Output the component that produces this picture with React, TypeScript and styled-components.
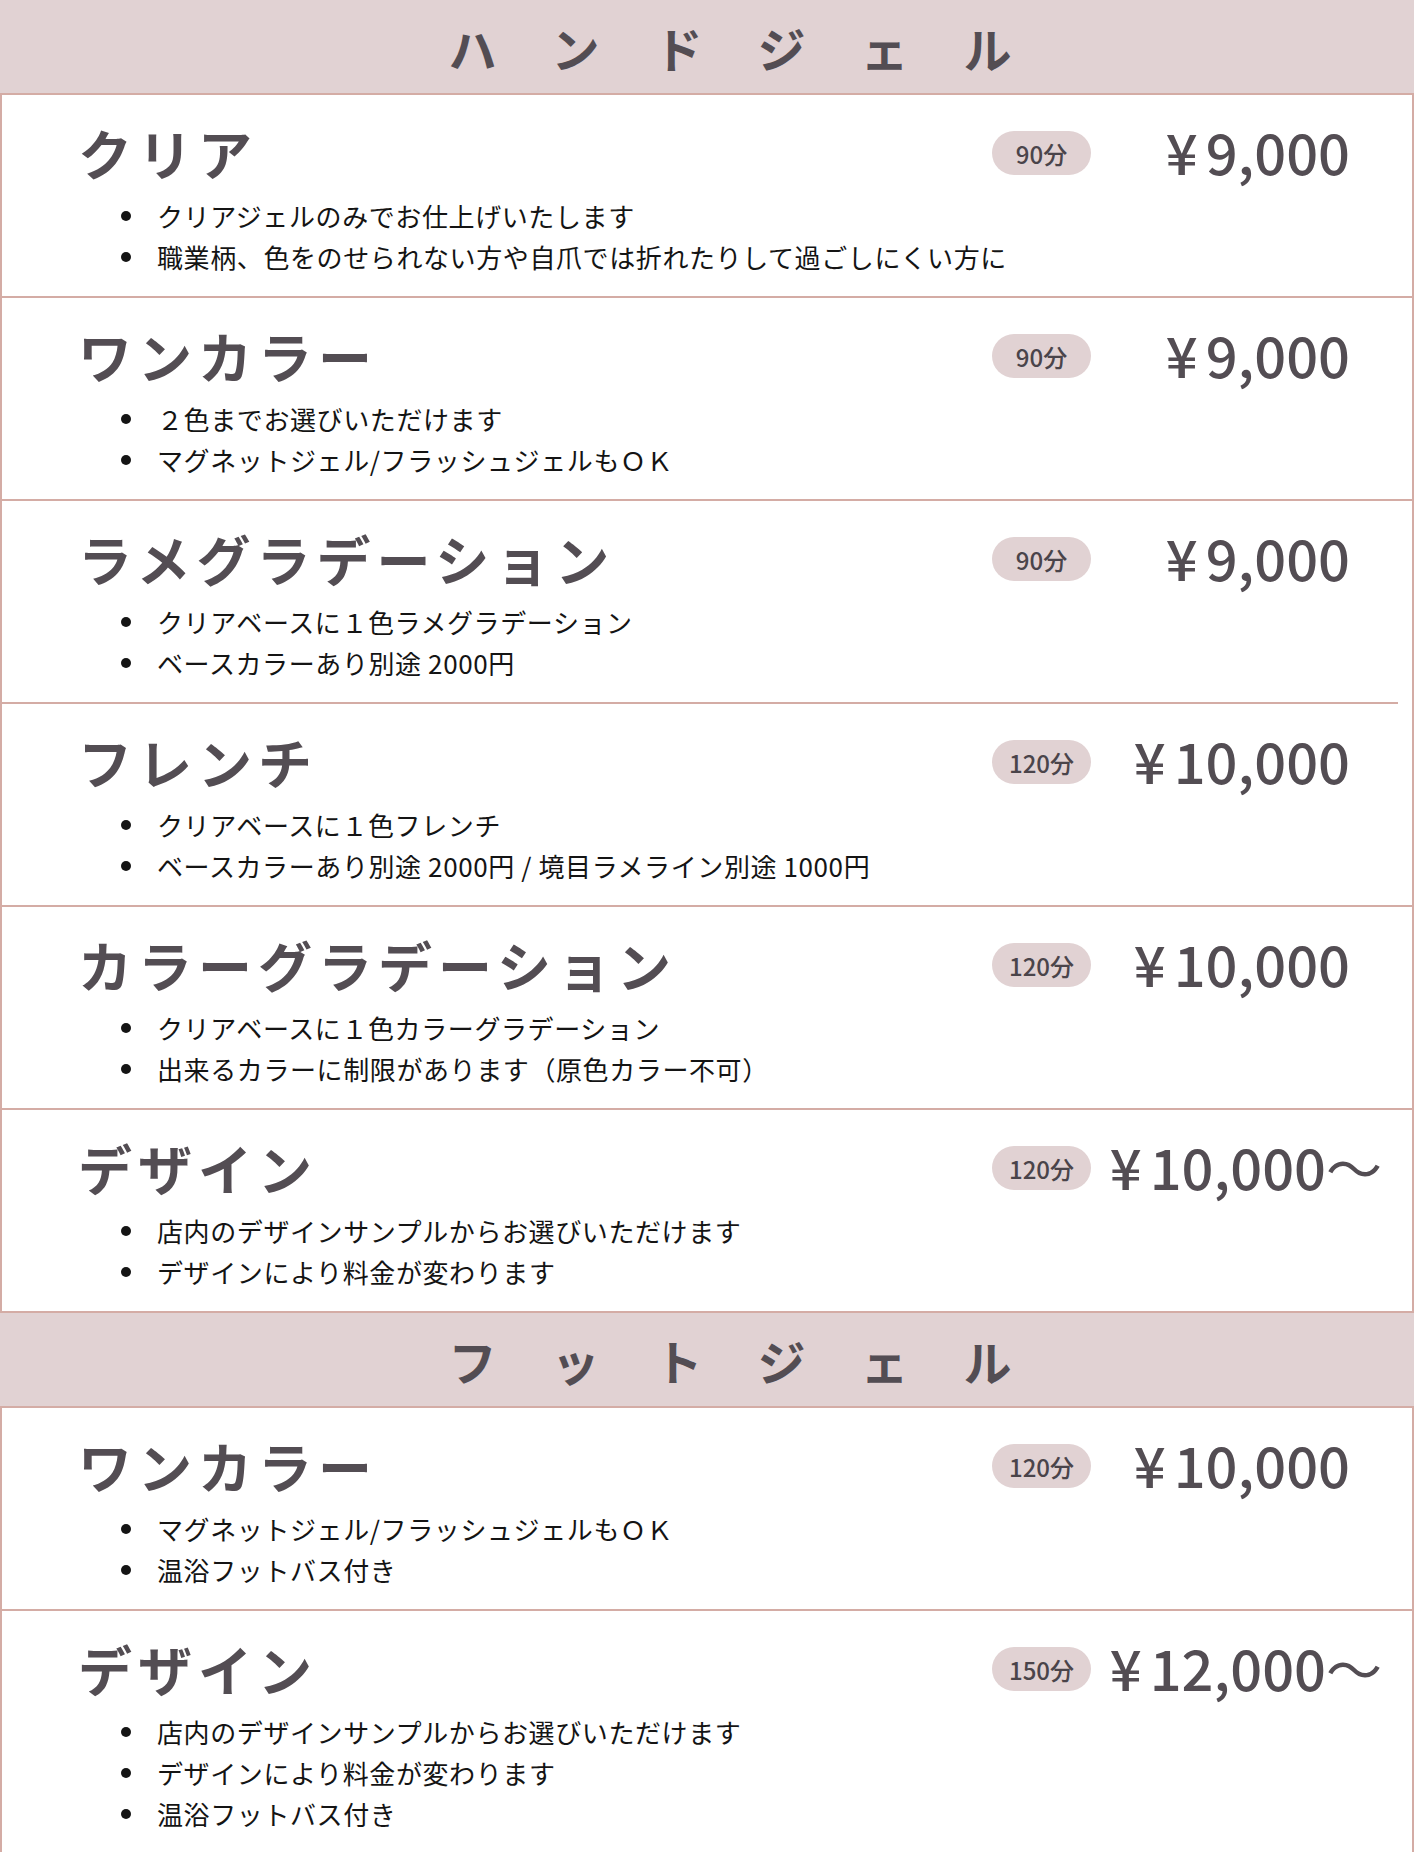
import React from "react";
import styled, { createGlobalStyle } from "styled-components";

const GlobalStyle = createGlobalStyle`
  html, body {
    margin: 0;
    padding: 0;
    background: #ffffff;
  }
  body {
    font-family: "Noto Sans CJK JP", "Noto Sans", sans-serif;
  }
  * { box-sizing: border-box; }
`;

const BORDER = "#d4aca5";
const BAND = "#e1d2d3";
const INK = "#534d53";

const Page = styled.main`
  width: 1414px;
  display: flex;
  flex-direction: column;
`;

const SectionHeader = styled.h2`
  margin: 0;
  height: 95px;
  display: flex;
  align-items: center;
  justify-content: center;
  padding-left: 101px;
  background: ${BAND};
  border-bottom: 2px solid ${BORDER};
  font-size: 48px;
  font-weight: 700;
  letter-spacing: 55px;
  color: ${INK};
  line-height: 1;
`;

const Item = styled.section<{ $shortRule?: boolean }>`
  background: #ffffff;
  border-left: 2px solid ${BORDER};
  border-right: 2px solid ${BORDER};
  padding: 26px 62px 19px 76px;
  ${(p) =>
    p.$shortRule
      ? `
    border-bottom: none;
    padding-bottom: 21px;
    background-image: linear-gradient(${BORDER}, ${BORDER});
    background-repeat: no-repeat;
    background-size: calc(100% - 14px) 2px;
    background-position: left bottom;
  `
      : `border-bottom: 2px solid ${BORDER};`}
`;

const Head = styled.div`
  display: flex;
  align-items: center;
  height: 64px;
`;

const Title = styled.h3`
  flex: 1;
  margin: 0;
  font-size: 54px;
  font-weight: 700;
  letter-spacing: 6px;
  line-height: 64px;
  color: ${INK};
  white-space: nowrap;
`;

const Badge = styled.span`
  width: 99px;
  height: 44px;
  border-radius: 22px;
  background: ${BAND};
  display: flex;
  align-items: center;
  justify-content: center;
  font-size: 24px;
  font-weight: 500;
  color: #4a444a;
  margin-right: 19px;
  letter-spacing: 0;
`;

const Price = styled.div`
  width: 240px;
  display: flex;
  justify-content: flex-end;
  align-items: center;
  padding-bottom: 4px;
  font-size: 56px;
  font-weight: 500;
  line-height: 60px;
  color: ${INK};
  white-space: nowrap;
`;

const Yen = styled.span`
  margin-right: 8px;
`;

const Tilde = styled.span`
  margin-right: -32px;
  font-weight: 400;
`;

const List = styled.ul`
  list-style: none;
  margin: 10px 0 0;
  padding: 0 0 0 43px;
`;

const Bullet = styled.li`
  display: flex;
  align-items: center;
  font-size: 26px;
  line-height: 41px;
  color: #141414;
  letter-spacing: 0.6px;
  white-space: nowrap;
`;

const Dot = styled.span`
  width: 10px;
  height: 10px;
  border-radius: 50%;
  background: #141414;
  margin-right: 26px;
  flex: none;
`;

type Menu = {
  title: string;
  time: string;
  price: string;
  from?: boolean;
  notes: string[];
  shortRule?: boolean;
};

const hand: Menu[] = [
  {
    title: "クリア",
    time: "90分",
    price: "9,000",
    notes: [
      "クリアジェルのみでお仕上げいたします",
      "職業柄、色をのせられない方や自爪では折れたりして過ごしにくい方に",
    ],
  },
  {
    title: "ワンカラー",
    time: "90分",
    price: "9,000",
    notes: ["２色までお選びいただけます", "マグネットジェル/フラッシュジェルもＯＫ"],
  },
  {
    title: "ラメグラデーション",
    time: "90分",
    price: "9,000",
    shortRule: true,
    notes: ["クリアベースに１色ラメグラデーション", "ベースカラーあり別途 2000円"],
  },
  {
    title: "フレンチ",
    time: "120分",
    price: "10,000",
    notes: [
      "クリアベースに１色フレンチ",
      "ベースカラーあり別途 2000円 / 境目ラメライン別途 1000円",
    ],
  },
  {
    title: "カラーグラデーション",
    time: "120分",
    price: "10,000",
    notes: [
      "クリアベースに１色カラーグラデーション",
      "出来るカラーに制限があります（原色カラー不可）",
    ],
  },
  {
    title: "デザイン",
    time: "120分",
    price: "10,000",
    from: true,
    notes: ["店内のデザインサンプルからお選びいただけます", "デザインにより料金が変わります"],
  },
];

const foot: Menu[] = [
  {
    title: "ワンカラー",
    time: "120分",
    price: "10,000",
    notes: ["マグネットジェル/フラッシュジェルもＯＫ", "温浴フットバス付き"],
  },
  {
    title: "デザイン",
    time: "150分",
    price: "12,000",
    from: true,
    notes: [
      "店内のデザインサンプルからお選びいただけます",
      "デザインにより料金が変わります",
      "温浴フットバス付き",
    ],
  },
];

function MenuItem({ m }: { m: Menu }) {
  return (
    <Item $shortRule={m.shortRule}>
      <Head>
        <Title>{m.title}</Title>
        <Badge>{m.time}</Badge>
        <Price>
          <Yen>¥</Yen>
          {m.price}
          {m.from && <Tilde>〜</Tilde>}
        </Price>
      </Head>
      <List>
        {m.notes.map((n) => (
          <Bullet key={n}>
            <Dot />
            {n}
          </Bullet>
        ))}
      </List>
    </Item>
  );
}

export default function App() {
  return (
    <>
      <GlobalStyle />
      <Page>
        <SectionHeader>ハンドジェル</SectionHeader>
        {hand.map((m) => (
          <MenuItem key={m.title + m.time} m={m} />
        ))}
        <SectionHeader>フットジェル</SectionHeader>
        {foot.map((m) => (
          <MenuItem key={m.title + m.time} m={m} />
        ))}
      </Page>
    </>
  );
}
